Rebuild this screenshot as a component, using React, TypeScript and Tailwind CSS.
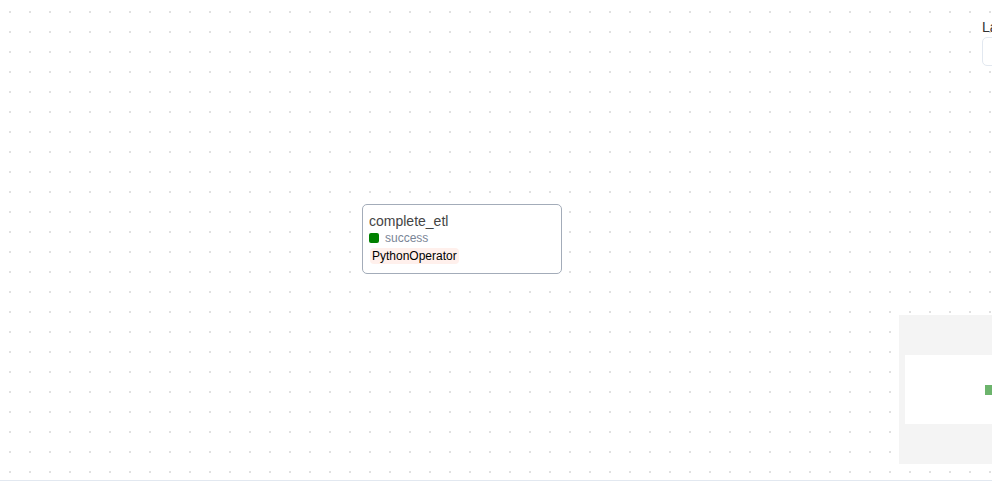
import React from "react";

const font = { fontFamily: '"Liberation Sans", Arial, sans-serif' };

function DotGrid() {
  return (
    <svg className="absolute inset-0 h-full w-full" aria-hidden>
      <defs>
        <pattern id="dots" width="20" height="20" patternUnits="userSpaceOnUse">
          <rect x="9" y="11" width="2" height="2" fill="#e0e0e0" />
        </pattern>
      </defs>
      <rect width="100%" height="100%" fill="url(#dots)" />
    </svg>
  );
}

function TaskNode() {
  return (
    <div className="absolute left-[362px] top-[204px] w-[200px] h-[70px] rounded-[5px] border border-[#a3acb9] bg-white px-[6px] pt-[7px]">
      <div className="text-[14px] leading-[18px] text-[#444]">complete_etl</div>
      <div className="mt-[2px] flex items-center gap-[6px] h-[12px]">
        <span className="h-[10px] w-[10px] rounded-[2px] bg-[#008000]" />
        <span className="text-[12px] leading-[12px] text-[#7a8596]">success</span>
      </div>
      <div className="mt-[4px] ml-[1px] block w-fit rounded-[4px] bg-[#fff0ec] px-[2px] text-[12px] leading-[16px] text-black">
        PythonOperator
      </div>
    </div>
  );
}

function MiniMap() {
  return (
    <div className="absolute left-[899px] top-[315px] w-[110px] h-[149px] bg-[#f4f4f4] pl-[6px] pt-[40px]">
      <div className="h-[69px] w-[110px] bg-white flex items-center pl-[80px]">
        <div className="h-[10px] w-[9px] bg-[#6cb46c]" />
      </div>
    </div>
  );
}

export default function App() {
  return (
    <div className="h-[502px] w-full overflow-hidden bg-white" style={font}>
      <div className="relative h-[481px] border-b border-[#e2e8f0] overflow-hidden">
        <DotGrid />
        <TaskNode />
        <MiniMap />
        <div className="absolute left-[982px] top-[18px] w-[120px]">
          <div className="text-[14px] leading-[18px] text-[#333]">Layout</div>
          <div className="mt-[1px] h-[29px] w-[120px] rounded-[5px] border border-[#e2e8f0] bg-white" />
        </div>
      </div>
    </div>
  );
}
